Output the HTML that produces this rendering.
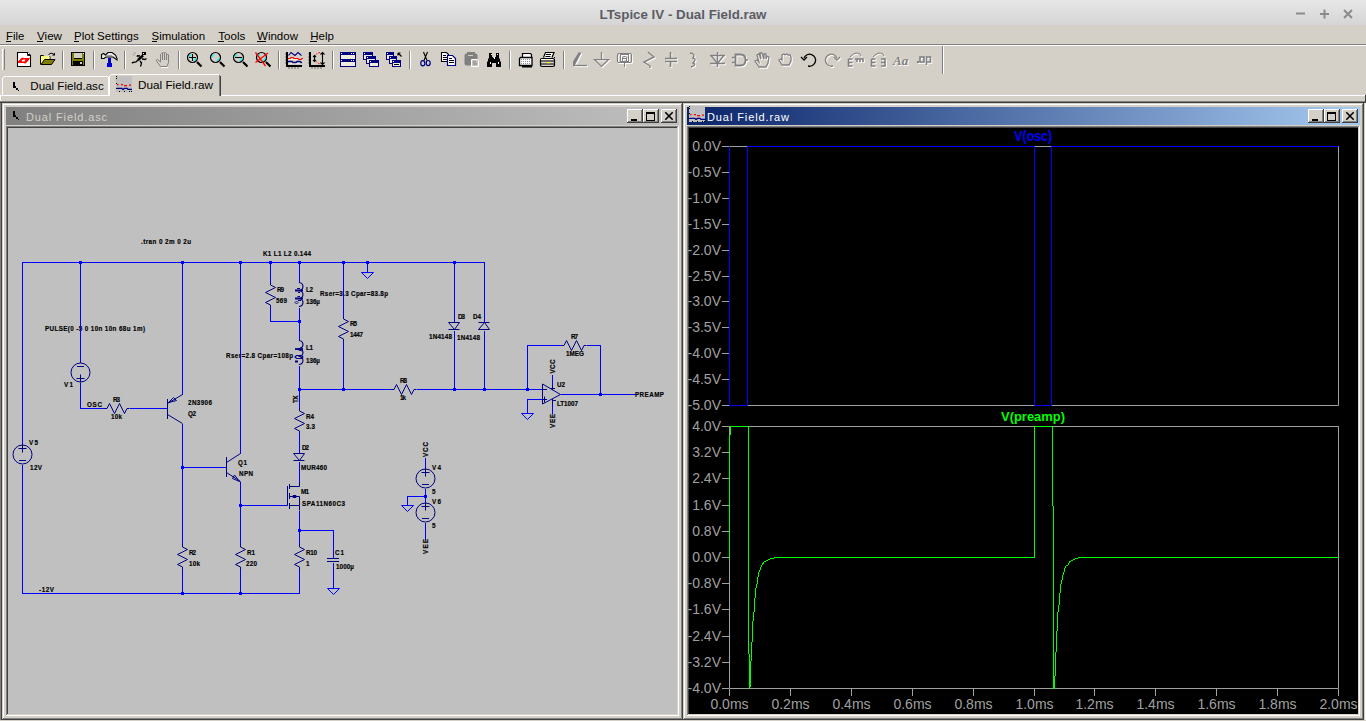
<!DOCTYPE html><html><head><meta charset="utf-8"><title>LTspice IV - Dual Field.raw</title><style>
*{margin:0;padding:0;box-sizing:border-box}
html,body{width:1366px;height:721px;overflow:hidden;background:#d4d0c8;font-family:"Liberation Sans",sans-serif}
.a{position:absolute}
svg{position:absolute;left:0;top:0}
</style></head><body>
<svg width="1366" height="721" viewBox="0 0 1366 721">
<defs><linearGradient id="tb" x1="0" y1="0" x2="0" y2="1"><stop offset="0" stop-color="#e7e7e7"/><stop offset="1" stop-color="#d5d5d5"/></linearGradient><linearGradient id="act" x1="0" y1="0" x2="1" y2="0"><stop offset="0" stop-color="#0a246a"/><stop offset="1" stop-color="#a6caf0"/></linearGradient><linearGradient id="inact" x1="0" y1="0" x2="1" y2="0"><stop offset="0" stop-color="#808080"/><stop offset="1" stop-color="#c0c0c0"/></linearGradient></defs><rect x="0" y="0" width="1366" height="25" fill="url(#tb)"/><text x="683" y="19" text-anchor="middle" font-family="Liberation Sans" font-weight="bold" font-size="13" fill="#5c5c66" textLength="167" lengthAdjust="spacingAndGlyphs">LTspice IV - Dual Field.raw</text><path d="M1296 13.5h9" stroke="#8a8a8a" stroke-width="2"/><path d="M1320 14h9M1324.5 9.5v9" stroke="#8a8a8a" stroke-width="2"/><path d="M1344 10l8 8M1352 10l-8 8" stroke="#8a8a8a" stroke-width="2"/><text x="6" y="39.5" font-family="Liberation Sans" font-size="11" fill="#000" textLength="18.3" lengthAdjust="spacingAndGlyphs">File</text><text x="37" y="39.5" font-family="Liberation Sans" font-size="11" fill="#000" textLength="25" lengthAdjust="spacingAndGlyphs">View</text><text x="74" y="39.5" font-family="Liberation Sans" font-size="11" fill="#000" textLength="64.8" lengthAdjust="spacingAndGlyphs">Plot Settings</text><text x="151.5" y="39.5" font-family="Liberation Sans" font-size="11" fill="#000" textLength="53.5" lengthAdjust="spacingAndGlyphs">Simulation</text><text x="218.2" y="39.5" font-family="Liberation Sans" font-size="11" fill="#000" textLength="27.1" lengthAdjust="spacingAndGlyphs">Tools</text><text x="257" y="39.5" font-family="Liberation Sans" font-size="11" fill="#000" textLength="41" lengthAdjust="spacingAndGlyphs">Window</text><text x="310.2" y="39.5" font-family="Liberation Sans" font-size="11" fill="#000" textLength="23.7" lengthAdjust="spacingAndGlyphs">Help</text><rect x="0" y="44" width="1366" height="1" fill="#808080"/><rect x="0" y="45" width="1366" height="1" fill="#ffffff"/><rect x="6" y="41" width="5" height="1" fill="#000"/><rect x="37" y="41" width="6" height="1" fill="#000"/><rect x="74" y="41" width="5" height="1" fill="#000"/><rect x="152" y="41" width="5" height="1" fill="#000"/><rect x="218" y="41" width="6" height="1" fill="#000"/><rect x="257" y="41" width="9" height="1" fill="#000"/><rect x="310" y="41" width="7" height="1" fill="#000"/><rect x="2" y="49" width="1" height="21" fill="#ffffff"/><rect x="4" y="49" width="1" height="21" fill="#808080"/><rect x="3" y="49" width="1" height="1" fill="#ffffff"/><rect x="62" y="51" width="1" height="18" fill="#808080"/><rect x="63" y="51" width="1" height="18" fill="#ffffff"/><rect x="93" y="51" width="1" height="18" fill="#808080"/><rect x="94" y="51" width="1" height="18" fill="#ffffff"/><rect x="124" y="51" width="1" height="18" fill="#808080"/><rect x="125" y="51" width="1" height="18" fill="#ffffff"/><rect x="178" y="51" width="1" height="18" fill="#808080"/><rect x="179" y="51" width="1" height="18" fill="#ffffff"/><rect x="278" y="51" width="1" height="18" fill="#808080"/><rect x="279" y="51" width="1" height="18" fill="#ffffff"/><rect x="332" y="51" width="1" height="18" fill="#808080"/><rect x="333" y="51" width="1" height="18" fill="#ffffff"/><rect x="409" y="51" width="1" height="18" fill="#808080"/><rect x="410" y="51" width="1" height="18" fill="#ffffff"/><rect x="509" y="51" width="1" height="18" fill="#808080"/><rect x="510" y="51" width="1" height="18" fill="#ffffff"/><rect x="563" y="51" width="1" height="18" fill="#808080"/><rect x="564" y="51" width="1" height="18" fill="#ffffff"/><rect x="942" y="46" width="1" height="28" fill="#808080"/><rect x="943" y="46" width="1" height="28" fill="#ffffff"/><path d="M17.5 52.5H27.5L30.5 55.5V66.5H17.5Z" fill="#fff" stroke="#000" stroke-width="1.1"/><path d="M27.5 52.5v3h3" fill="#000" stroke="#000" stroke-width="0.8"/><rect x="28" y="53" width="1" height="1" fill="#fff"/><path d="M18 61.5L20.5 59L22 57.5L23.5 58H30.5V57.5L28 61L26 63L24.5 64V63H18Z" fill="#f00"/><path d="M21.5 60.5L23 59.5H25.5L24.5 61.5H22.5Z" fill="#fff"/><defs><pattern id="chk" width="2" height="2" patternUnits="userSpaceOnUse"><rect width="2" height="2" fill="#ffff00"/><rect width="1" height="1" fill="#fff"/><rect x="1" y="1" width="1" height="1" fill="#fff"/></pattern></defs><path d="M40.5 64.5V55.5h3l1 1h5.5v3" fill="url(#chk)" stroke="#000"/><path d="M41 56h8.5v3.5h-4L41 64z" fill="url(#chk)"/><path d="M41 64.5L44.5 59.5H55L51.5 64.5Z" fill="#808000" stroke="#000"/><path d="M48.5 54.5Q51 52 53.5 54" fill="none" stroke="#000"/><path d="M52 55.5h3v-3z" fill="#000"/><rect x="71" y="52" width="14" height="14" fill="#000"/><rect x="72" y="53" width="12" height="12" fill="#808000"/><rect x="74" y="53" width="8" height="5" fill="#d4d0c8"/><rect x="74" y="58" width="8" height="1" fill="#000"/><rect x="73" y="61" width="10" height="4" fill="#000"/><rect x="80" y="62" width="2" height="2" fill="#d4d0c8"/><rect x="83" y="53" width="1" height="1" fill="#fff"/><path d="M101.5 54.5L103.5 53.5L105.5 55L108 52.5H112L115.5 55L117 58.5V60L113 57H106L104 58.5H101.5Z" fill="#e8e8e8" stroke="#000" stroke-width="1.1"/><path d="M106 55.5h6" stroke="#a0a0a0"/><rect x="108" y="58" width="3" height="5" fill="#0000c0"/><rect x="107" y="63" width="5" height="4" fill="#0000e0"/><rect x="142" y="52" width="4" height="3" fill="#000"/><rect x="143" y="53" width="1" height="1" fill="#fff"/><path d="M143 55.5L137.5 60.5L136 62L132.5 62.5V63.5M140 61L141.5 63L141 65L140.5 66.5M142 59L145 59.5L146.5 58.5M140 56L137.5 55.8L137 56.8" fill="none" stroke="#000" stroke-width="1.3"/><path d="M143 55.5L138 60" stroke="#000" stroke-width="2.4"/><path d="M134 52.5l2 1M132.5 54l2 1.5" stroke="#909090" stroke-width="0.9"/><path d="M160.5 66.5L156 60.5L157.5 59.5L160.5 62V54.5L161.5 53.5L162.5 54.5V60V53L163.5 52L164.5 53V60V53.5L165.5 52.5L166.5 53.5V60V55L167.5 54L168.5 55V62.5L167 66.5Z" fill="#d4d0c8" stroke="#808080" stroke-width="1"/><path d="M161 67.5h7" stroke="#fff"/><circle cx="192.5" cy="57.5" r="5" fill="#d4d0c8" stroke="#000" stroke-width="1.2"/><path d="M189.0 57.5A3.6 3.6 0 0 1 191.5 54.5M196.0 58.0A3.6 3.6 0 0 1 193.5 60.7" stroke="#00ffff" stroke-width="1.2" fill="none"/><path d="M197.0 62.0L201.5 66.5" stroke="#000" stroke-width="2.2"/><path d="M189 57.5h7M192.5 54v7" stroke="#000" stroke-width="1.1"/><circle cx="215.5" cy="57.5" r="5" fill="#d4d0c8" stroke="#000" stroke-width="1.2"/><path d="M212.0 57.5A3.6 3.6 0 0 1 214.5 54.5M219.0 58.0A3.6 3.6 0 0 1 216.5 60.7" stroke="#00ffff" stroke-width="1.2" fill="none"/><path d="M220.0 62.0L224.5 66.5" stroke="#000" stroke-width="2.2"/><circle cx="238.5" cy="57.5" r="5" fill="#d4d0c8" stroke="#000" stroke-width="1.2"/><path d="M235.0 57.5A3.6 3.6 0 0 1 237.5 54.5M242.0 58.0A3.6 3.6 0 0 1 239.5 60.7" stroke="#00ffff" stroke-width="1.2" fill="none"/><path d="M243.0 62.0L247.5 66.5" stroke="#000" stroke-width="2.2"/><path d="M235 57.5h7" stroke="#000" stroke-width="1.1"/><circle cx="261.5" cy="57.5" r="5" fill="#d4d0c8" stroke="#000" stroke-width="1.2"/><path d="M258.0 57.5A3.6 3.6 0 0 1 260.5 54.5M265.0 58.0A3.6 3.6 0 0 1 262.5 60.7" stroke="#00ffff" stroke-width="1.2" fill="none"/><path d="M266.0 62.0L270.5 66.5" stroke="#000" stroke-width="2.2"/><path d="M255.5 52.5L265.5 66.0M268.0 53.0L255.5 62.5" stroke="#f00" stroke-width="1.3"/><rect x="286" y="52" width="2" height="15" fill="#000"/><rect x="286" y="65" width="16" height="2" fill="#000"/><path d="M285.5 54h1M285.5 57h1M285.5 60h1M285.5 63h1M289 67.5v1M292 67.5v1M295 67.5v1M298 67.5v1" stroke="#000" stroke-dasharray="1 1"/><path d="M289 59.5h13M289 63.5h13" stroke="#f0ecd8"/><path d="M288.5 55.5L291 52.5L295 55.5L298 52.5L301.5 55.5" fill="none" stroke="#000080" stroke-width="1.1"/><path d="M288 58.5h2l1-1h2l1 1h4l1 1h2l1-1h1" fill="none" stroke="#f00" stroke-width="1.2"/><path d="M288 61.5h4l1 1h3l1-1h3l1 1h1" fill="none" stroke="#000080" stroke-width="1.4"/><rect x="309" y="52" width="2" height="15" fill="#000"/><rect x="309" y="65" width="16" height="2" fill="#000"/><path d="M308.5 54h1M308.5 57h1M308.5 60h1M308.5 63h1M312 67.5v1M315 67.5v1M318 67.5v1M321 67.5v1" stroke="#000"/><path d="M320 52.5Q314 54 314.5 58.5Q315 62 320 64" fill="none" stroke="#f00" stroke-dasharray="1.5 1"/><path d="M322.5 52.5v12M320.5 54.5l2-2 2 2M320.5 62.5l2 2 2-2M314.5 55.5v6M313 57l1.5-1.5 1.5 1.5M313 60l1.5 1.5 1.5-1.5" fill="none" stroke="#000" stroke-width="1.1"/><rect x="340" y="52" width="16" height="8" fill="#000080"/><rect x="341" y="55" width="14" height="4" fill="#f0ecdc"/><rect x="341" y="53" width="1" height="1" fill="#fff"/><rect x="340" y="59" width="16" height="8" fill="#000080"/><rect x="341" y="62" width="14" height="4" fill="#f0ecdc"/><rect x="341" y="60" width="1" height="1" fill="#fff"/><rect x="353" y="53" width="1" height="1" fill="#fff"/><rect x="351" y="53" width="1" height="1" fill="#fff"/><rect x="353" y="60" width="1" height="1" fill="#fff"/><rect x="351" y="60" width="1" height="1" fill="#fff"/><rect x="363" y="52" width="10" height="8" fill="#000080"/><rect x="364" y="55" width="8" height="4" fill="#f0ecdc"/><rect x="364" y="53" width="1" height="1" fill="#fff"/><rect x="366" y="56" width="10" height="8" fill="#000080"/><rect x="367" y="59" width="8" height="4" fill="#f0ecdc"/><rect x="367" y="57" width="1" height="1" fill="#fff"/><rect x="369" y="60" width="10" height="7" fill="#000080"/><rect x="370" y="63" width="8" height="3" fill="#f0ecdc"/><rect x="370" y="61" width="1" height="1" fill="#fff"/><rect x="386" y="52" width="8" height="8" fill="#000080"/><rect x="387" y="55" width="6" height="4" fill="#f0ecdc"/><rect x="387" y="53" width="1" height="1" fill="#fff"/><rect x="389" y="56" width="8" height="8" fill="#000080"/><rect x="390" y="59" width="6" height="4" fill="#f0ecdc"/><rect x="390" y="57" width="1" height="1" fill="#fff"/><rect x="392" y="60" width="9" height="7" fill="#000080"/><rect x="393" y="63" width="7" height="3" fill="#f0ecdc"/><rect x="393" y="61" width="1" height="1" fill="#fff"/><rect x="394" y="64" width="5" height="1" fill="#000"/><path d="M398.5 53.5l3 3M398 53h2.5M398 53v2.5" stroke="#000" stroke-width="1.2"/><path d="M423.5 52L427 60.5M427.5 52L424 60.5" stroke="#000" stroke-width="1.1"/><ellipse cx="422.8" cy="63.3" rx="2" ry="2.6" fill="none" stroke="#000080" stroke-width="1.2"/><ellipse cx="428.2" cy="63.1" rx="2" ry="2.6" fill="none" stroke="#000080" stroke-width="1.2"/><path d="M441.5 52.5h5l2 2v7h-7z" fill="#fff" stroke="#000" stroke-width="1.1"/><path d="M443 55.5h3M443 57.5h4M443 59.5h4" stroke="#000"/><path d="M447.5 55.5h5l3 3v7h-8z" fill="#fff" stroke="#000080" stroke-width="1.2"/><path d="M449 58.5h3M449 60.5h5M449 62.5h5" stroke="#000"/><rect x="464.5" y="53.5" width="13" height="12" rx="2" fill="#808080"/><rect x="467" y="52" width="8" height="2" fill="#808080"/><rect x="468" y="55" width="5" height="1" fill="#d4d0c8"/><path d="M471.5 59.5h6l1 1v6h-7z" fill="#c8c4bc" stroke="#fff"/><path d="M473 62h3M473 64h4" stroke="#808080"/><path d="M489 53h3v4h1v1h2v-1h1v-4h3v5l1 1v2l1 1v5h-5v-4h-4v4h-5v-5l1-1v-2l1-1z" fill="#000"/><rect x="491" y="54" width="1" height="1" fill="#fff"/><rect x="497" y="54" width="1" height="1" fill="#fff"/><rect x="490" y="62" width="1" height="2" fill="#fff"/><rect x="498" y="62" width="1" height="2" fill="#fff"/><rect x="494" y="57" width="1" height="2" fill="#fff"/><path d="M522.5 57V53.5h8l1 1V57" fill="#fff" stroke="#000" stroke-width="1.2"/><path d="M519.5 65.5V58.5l1-1h11.5v8z" fill="#fff" stroke="#000" stroke-width="1.3"/><rect x="522" y="66" width="10" height="1.5" fill="#000"/><path d="M521 59.5h10M521 61.5h10M521 63.5h10" stroke="#909090" stroke-dasharray="1 1"/><path d="M543.5 57.5L545.5 52.5H554L552 57.5" fill="#fff" stroke="#000" stroke-width="1.2"/><path d="M546 54.5h5M545.5 56.5h5" stroke="#000"/><rect x="540.5" y="58.5" width="14" height="8" rx="1.5" fill="#d4d0c8" stroke="#000" stroke-width="1.2"/><path d="M541 59.5h12" stroke="#fff"/><path d="M541 61h13M541 64h13" stroke="#000"/><rect x="547" y="62" width="3" height="1.2" fill="#ffff00"/><path d="M554.5 57v9" stroke="#000" stroke-dasharray="1 1"/><g transform="translate(574,53)"><path d="M0 13.5V9.5L5.5 0.5H8.5L2 13z" fill="#ffffff"/><path d="M0 13.5h14" stroke="#ffffff" stroke-width="1.3"/></g><g transform="translate(573,52)"><path d="M0 13.5V9.5L5.5 0.5H8.5L2 13z" fill="#808080"/><path d="M0 13.5h14" stroke="#808080" stroke-width="1.3"/></g><g transform="translate(595,53)"><path d="M7.5 0v7" stroke="#ffffff" stroke-width="1.3"/><path d="M0.5 7.6h14l-7 6.8z" fill="none" stroke="#ffffff" stroke-width="1.3"/></g><g transform="translate(594,52)"><path d="M7.5 0v7" stroke="#808080" stroke-width="1.3"/><path d="M0.5 7.6h14l-7 6.8z" fill="none" stroke="#808080" stroke-width="1.3"/></g><g transform="translate(618,53)"><rect x="0.5" y="1.5" width="14" height="9" rx="1.5" fill="none" stroke="#ffffff" stroke-width="1.2"/><rect x="3.5" y="2.5" width="8" height="7" fill="none" stroke="#ffffff" stroke-width="1"/><path d="M5.5 9V5.5L6.5 4.5H8.5L9.5 5.5V9M5.5 6.5H9.5" fill="none" stroke="#ffffff" stroke-width="1"/><path d="M7.5 11v4" stroke="#ffffff" stroke-width="1.1"/></g><g transform="translate(617,52)"><rect x="0.5" y="1.5" width="14" height="9" rx="1.5" fill="none" stroke="#808080" stroke-width="1.2"/><rect x="3.5" y="2.5" width="8" height="7" fill="none" stroke="#808080" stroke-width="1"/><path d="M5.5 9V5.5L6.5 4.5H8.5L9.5 5.5V9M5.5 6.5H9.5" fill="none" stroke="#808080" stroke-width="1"/><path d="M7.5 11v4" stroke="#808080" stroke-width="1.1"/></g><g transform="translate(643,53)"><path d="M6 0l1 1l5 4-10 5 6 4v2" fill="none" stroke="#ffffff" stroke-width="1.4"/></g><g transform="translate(642,52)"><path d="M6 0l1 1l5 4-10 5 6 4v2" fill="none" stroke="#808080" stroke-width="1.4"/></g><g transform="translate(666,53)"><path d="M5.5 0v6M5.5 10v5M0 6.5h12M0 9.5h12" stroke="#ffffff" stroke-width="1.6"/></g><g transform="translate(665,52)"><path d="M5.5 0v6M5.5 10v5M0 6.5h12M0 9.5h12" stroke="#808080" stroke-width="1.6"/></g><g transform="translate(691,53)"><path d="M0 1q6 1 3 5q4 1 0 5q4 2-2 4" fill="none" stroke="#ffffff" stroke-width="1.4"/></g><g transform="translate(690,52)"><path d="M0 1q6 1 3 5q4 1 0 5q4 2-2 4" fill="none" stroke="#808080" stroke-width="1.4"/></g><g transform="translate(711,53)"><path d="M7.5 0v15M0 3.5h15M0 11.5h15" stroke="#ffffff" stroke-width="1.4"/><path d="M1 3.5l6.5 8 6.5-8" fill="none" stroke="#ffffff" stroke-width="1.4"/></g><g transform="translate(710,52)"><path d="M7.5 0v15M0 3.5h15M0 11.5h15" stroke="#808080" stroke-width="1.4"/><path d="M1 3.5l6.5 8 6.5-8" fill="none" stroke="#808080" stroke-width="1.4"/></g><g transform="translate(733,53)"><path d="M3.5 2.5h5q5 0 5 5.5t-5 5.5h-5z" fill="none" stroke="#ffffff" stroke-width="1.8"/><path d="M0 5.5h4M0 10.5h4M13 8h3" stroke="#ffffff" stroke-width="1.4"/></g><g transform="translate(732,52)"><path d="M3.5 2.5h5q5 0 5 5.5t-5 5.5h-5z" fill="none" stroke="#808080" stroke-width="1.8"/><path d="M0 5.5h4M0 10.5h4M13 8h3" stroke="#808080" stroke-width="1.4"/></g><g transform="translate(756,53)"><path d="M4 15l-4-6 2-1 2 2-2-7 2-1 2 5-1-6 2 0 2 6v-5l2 0 0 5 1-3 2 1-1 6-2 4z" fill="none" stroke="#ffffff" stroke-width="1.3"/></g><g transform="translate(755,52)"><path d="M4 15l-4-6 2-1 2 2-2-7 2-1 2 5-1-6 2 0 2 6v-5l2 0 0 5 1-3 2 1-1 6-2 4z" fill="none" stroke="#808080" stroke-width="1.3"/></g><g transform="translate(780,53)"><path d="M3 13l-3-5 2-1 1 1v-5l2-1 1 1 2-1 1 1 2 0 1 2v4l-2 4z" fill="none" stroke="#ffffff" stroke-width="1.3"/></g><g transform="translate(779,52)"><path d="M3 13l-3-5 2-1 1 1v-5l2-1 1 1 2-1 1 1 2 0 1 2v4l-2 4z" fill="none" stroke="#808080" stroke-width="1.3"/></g><g transform="translate(801,52)"><path d="M3 6a6 6 0 1 1 4 8" fill="none" stroke="#000" stroke-width="1.3"/><path d="M0 5l3 3 3-3" fill="none" stroke="#000" stroke-width="1.3"/></g><g transform="translate(826,53)"><path d="M12 6a6 6 0 1 0-4 8" fill="none" stroke="#ffffff" stroke-width="1.3"/><path d="M9 5l3 3 3-3" fill="none" stroke="#ffffff" stroke-width="1.3"/></g><g transform="translate(825,52)"><path d="M12 6a6 6 0 1 0-4 8" fill="none" stroke="#808080" stroke-width="1.3"/><path d="M9 5l3 3 3-3" fill="none" stroke="#808080" stroke-width="1.3"/></g><g transform="translate(848,53)"><path d="M1.5 7v7h4M1.5 7h4M1.5 10.5h4M8 7h8v3M10 7v3M13 7v3" fill="none" stroke="#ffffff" stroke-width="1.6"/><path d="M3 5q5-6 10-3l1 2" fill="none" stroke="#ffffff"/></g><g transform="translate(847,52)"><path d="M1.5 7v7h4M1.5 7h4M1.5 10.5h4M8 7h8v3M10 7v3M13 7v3" fill="none" stroke="#808080" stroke-width="1.6"/><path d="M3 5q5-6 10-3l1 2" fill="none" stroke="#808080"/></g><g transform="translate(871,53)"><path d="M1.5 7v7h4M1.5 7h4M1.5 10.5h4M11 7h4v7h-4M11 10.5h4" fill="none" stroke="#ffffff" stroke-width="1.6"/><path d="M3 5q5-6 10-3l1 2" fill="none" stroke="#ffffff"/></g><g transform="translate(870,52)"><path d="M1.5 7v7h4M1.5 7h4M1.5 10.5h4M11 7h4v7h-4M11 10.5h4" fill="none" stroke="#808080" stroke-width="1.6"/><path d="M3 5q5-6 10-3l1 2" fill="none" stroke="#808080"/></g><g transform="translate(894,53)"><text x="0" y="13" font-size="13" font-style="italic" font-weight="bold" font-family="Liberation Serif" fill="#ffffff">Aa</text></g><g transform="translate(893,52)"><text x="0" y="13" font-size="13" font-style="italic" font-weight="bold" font-family="Liberation Serif" fill="#808080">Aa</text></g><g transform="translate(918,53)"><rect x="0" y="9" width="2" height="2" fill="#ffffff"/><rect x="3" y="5" width="4" height="5" fill="none" stroke="#ffffff" stroke-width="1.6"/><path d="M9.5 13v-8h4v5h-4" fill="none" stroke="#ffffff" stroke-width="1.6"/></g><g transform="translate(917,52)"><rect x="0" y="9" width="2" height="2" fill="#808080"/><rect x="3" y="5" width="4" height="5" fill="none" stroke="#808080" stroke-width="1.6"/><path d="M9.5 13v-8h4v5h-4" fill="none" stroke="#808080" stroke-width="1.6"/></g><rect x="0" y="95" width="109" height="1" fill="#fff"/><rect x="221" y="95" width="1145" height="1" fill="#fff"/><rect x="0" y="95" width="1" height="7" fill="#fff"/><rect x="2" y="78" width="1" height="17" fill="#fff"/><rect x="4" y="76" width="104" height="1" fill="#fff"/><rect x="3" y="77" width="1" height="1" fill="#fff"/><rect x="108" y="77" width="1" height="18" fill="#fff"/><rect x="109" y="76" width="1" height="20" fill="#fff"/><rect x="111" y="74" width="108" height="1" fill="#fff"/><rect x="110" y="75" width="1" height="1" fill="#fff"/><rect x="219" y="75" width="1" height="21" fill="#808080"/><rect x="220" y="76" width="1" height="20" fill="#404040"/><text x="30.3" y="89.6" font-family="Liberation Sans" font-size="11" fill="#000" textLength="73.4" lengthAdjust="spacingAndGlyphs">Dual Field.asc</text><text x="138" y="89" font-family="Liberation Sans" font-size="11" fill="#000" textLength="75" lengthAdjust="spacingAndGlyphs">Dual Field.raw</text><g transform="translate(13,82)"><rect x="0" y="0" width="2" height="5" fill="#000"/><rect x="0" y="4" width="3" height="2" fill="#000"/><rect x="3" y="6" width="2" height="2" fill="#000"/><rect x="5" y="8" width="1" height="1" fill="#000"/></g><g transform="translate(116,76)"><rect x="0" y="0" width="16" height="16" fill="#c0c0c0"/><rect x="0" y="0" width="1" height="1" fill="#000"/><rect x="0" y="2" width="1" height="1" fill="#000"/><rect x="0" y="7" width="1" height="1" fill="#000"/><rect x="0" y="12" width="1" height="1" fill="#000"/><rect x="3" y="15" width="1" height="1" fill="#000"/><rect x="8" y="15" width="1" height="1" fill="#000"/><rect x="13" y="15" width="1" height="1" fill="#000"/><rect x="15" y="15" width="1" height="1" fill="#000"/><rect x="1" y="8" width="1.5" height="1.3" fill="#f00"/><rect x="5" y="8" width="2" height="1.3" fill="#f00"/><rect x="8" y="9" width="3" height="1.3" fill="#f00"/><rect x="13" y="8.5" width="2" height="1.3" fill="#f00"/><path d="M0.5 12.3H5.8L6.8 13.3H7.5L8.2 12.3H11L12 13.3H16" fill="none" stroke="#000080" stroke-width="1.3"/></g><rect x="0" y="101" width="1366" height="1" fill="#808080"/><rect x="0" y="102" width="1366" height="1" fill="#404040"/><rect x="0" y="103" width="1" height="618" fill="#808080"/><rect x="1" y="103" width="1" height="618" fill="#404040"/><rect x="1364" y="103" width="1" height="618" fill="#d4d0c8"/><rect x="1365" y="103" width="1" height="618" fill="#ffffff"/><rect x="1365" y="95" width="1" height="8" fill="#404040"/><rect x="0" y="720" width="1366" height="1" fill="#d4d0c8"/><rect x="2" y="103" width="681" height="617" fill="#d4d0c8"/><rect x="2" y="103" width="681" height="1" fill="#d4d0c8"/><rect x="2" y="103" width="1" height="617" fill="#d4d0c8"/><rect x="3" y="104" width="679" height="1" fill="#fff"/><rect x="3" y="104" width="1" height="615" fill="#fff"/><rect x="2" y="719" width="681" height="1" fill="#404040"/><rect x="682" y="103" width="1" height="617" fill="#404040"/><rect x="3" y="718" width="679" height="1" fill="#808080"/><rect x="681" y="104" width="1" height="615" fill="#808080"/><rect x="6" y="107" width="673" height="18" fill="url(#inact)"/><text x="26" y="120.7" font-family="Liberation Sans" font-size="11" fill="#d4d0c8" textLength="81" lengthAdjust="spacing">Dual Field.asc</text><rect x="661" y="109" width="16" height="14" fill="#d4d0c8"/><rect x="661" y="109" width="16" height="1" fill="#fff"/><rect x="661" y="109" width="1" height="14" fill="#fff"/><rect x="661" y="122" width="16" height="1" fill="#404040"/><rect x="676" y="109" width="1" height="14" fill="#404040"/><rect x="662" y="121" width="14" height="1" fill="#808080"/><rect x="675" y="110" width="1" height="12" fill="#808080"/><path d="M665.3 112.3l7.4 7.4M672.7 112.3l-7.4 7.4" stroke="#000" stroke-width="1.6"/><rect x="643" y="109" width="16" height="14" fill="#d4d0c8"/><rect x="643" y="109" width="16" height="1" fill="#fff"/><rect x="643" y="109" width="1" height="14" fill="#fff"/><rect x="643" y="122" width="16" height="1" fill="#404040"/><rect x="658" y="109" width="1" height="14" fill="#404040"/><rect x="644" y="121" width="14" height="1" fill="#808080"/><rect x="657" y="110" width="1" height="12" fill="#808080"/><rect x="646" y="112" width="9" height="2" fill="#000"/><rect x="646" y="112" width="1" height="9" fill="#000"/><rect x="654" y="112" width="1" height="9" fill="#000"/><rect x="646" y="120" width="9" height="1" fill="#000"/><rect x="627" y="109" width="16" height="14" fill="#d4d0c8"/><rect x="627" y="109" width="16" height="1" fill="#fff"/><rect x="627" y="109" width="1" height="14" fill="#fff"/><rect x="627" y="122" width="16" height="1" fill="#404040"/><rect x="642" y="109" width="1" height="14" fill="#404040"/><rect x="628" y="121" width="14" height="1" fill="#808080"/><rect x="641" y="110" width="1" height="12" fill="#808080"/><rect x="631" y="119" width="6" height="2" fill="#000"/><rect x="6" y="126" width="673" height="1" fill="#808080"/><rect x="6" y="126" width="1" height="590" fill="#808080"/><rect x="7" y="127" width="671" height="1" fill="#404040"/><rect x="7" y="127" width="1" height="588" fill="#404040"/><rect x="6" y="715" width="673" height="1" fill="#fff"/><rect x="678" y="126" width="1" height="590" fill="#fff"/><rect x="7" y="714" width="671" height="1" fill="#d4d0c8"/><rect x="677" y="127" width="1" height="588" fill="#d4d0c8"/><rect x="683" y="103" width="681" height="617" fill="#d4d0c8"/><rect x="683" y="103" width="681" height="1" fill="#d4d0c8"/><rect x="683" y="103" width="1" height="617" fill="#d4d0c8"/><rect x="684" y="104" width="679" height="1" fill="#fff"/><rect x="684" y="104" width="1" height="615" fill="#fff"/><rect x="683" y="719" width="681" height="1" fill="#404040"/><rect x="1363" y="103" width="1" height="617" fill="#404040"/><rect x="684" y="718" width="679" height="1" fill="#808080"/><rect x="1362" y="104" width="1" height="615" fill="#808080"/><rect x="687" y="107" width="673" height="18" fill="url(#act)"/><text x="707" y="120.7" font-family="Liberation Sans" font-size="11" fill="#ffffff" textLength="82" lengthAdjust="spacing">Dual Field.raw</text><rect x="1342" y="109" width="16" height="14" fill="#d4d0c8"/><rect x="1342" y="109" width="16" height="1" fill="#fff"/><rect x="1342" y="109" width="1" height="14" fill="#fff"/><rect x="1342" y="122" width="16" height="1" fill="#404040"/><rect x="1357" y="109" width="1" height="14" fill="#404040"/><rect x="1343" y="121" width="14" height="1" fill="#808080"/><rect x="1356" y="110" width="1" height="12" fill="#808080"/><path d="M1346.3 112.3l7.4 7.4M1353.7 112.3l-7.4 7.4" stroke="#000" stroke-width="1.6"/><rect x="1324" y="109" width="16" height="14" fill="#d4d0c8"/><rect x="1324" y="109" width="16" height="1" fill="#fff"/><rect x="1324" y="109" width="1" height="14" fill="#fff"/><rect x="1324" y="122" width="16" height="1" fill="#404040"/><rect x="1339" y="109" width="1" height="14" fill="#404040"/><rect x="1325" y="121" width="14" height="1" fill="#808080"/><rect x="1338" y="110" width="1" height="12" fill="#808080"/><rect x="1327" y="112" width="9" height="2" fill="#000"/><rect x="1327" y="112" width="1" height="9" fill="#000"/><rect x="1335" y="112" width="1" height="9" fill="#000"/><rect x="1327" y="120" width="9" height="1" fill="#000"/><rect x="1308" y="109" width="16" height="14" fill="#d4d0c8"/><rect x="1308" y="109" width="16" height="1" fill="#fff"/><rect x="1308" y="109" width="1" height="14" fill="#fff"/><rect x="1308" y="122" width="16" height="1" fill="#404040"/><rect x="1323" y="109" width="1" height="14" fill="#404040"/><rect x="1309" y="121" width="14" height="1" fill="#808080"/><rect x="1322" y="110" width="1" height="12" fill="#808080"/><rect x="1312" y="119" width="6" height="2" fill="#000"/><rect x="687" y="126" width="673" height="1" fill="#808080"/><rect x="687" y="126" width="1" height="590" fill="#808080"/><rect x="688" y="127" width="671" height="1" fill="#404040"/><rect x="688" y="127" width="1" height="588" fill="#404040"/><rect x="687" y="715" width="673" height="1" fill="#fff"/><rect x="1359" y="126" width="1" height="590" fill="#fff"/><rect x="688" y="714" width="671" height="1" fill="#d4d0c8"/><rect x="1358" y="127" width="1" height="588" fill="#d4d0c8"/><g transform="translate(13,111)"><rect x="0" y="0" width="2" height="5" fill="#000"/><rect x="0" y="4" width="3" height="2" fill="#000"/><rect x="3" y="6" width="2" height="2" fill="#000"/><rect x="5" y="8" width="1" height="1" fill="#000"/></g><g transform="translate(689,106)"><rect x="0" y="0" width="16" height="16" fill="#c0c0c0"/><rect x="0" y="0" width="1" height="1" fill="#000"/><rect x="0" y="2" width="1" height="1" fill="#000"/><rect x="0" y="7" width="1" height="1" fill="#000"/><rect x="0" y="12" width="1" height="1" fill="#000"/><rect x="3" y="15" width="1" height="1" fill="#000"/><rect x="8" y="15" width="1" height="1" fill="#000"/><rect x="13" y="15" width="1" height="1" fill="#000"/><rect x="15" y="15" width="1" height="1" fill="#000"/><rect x="1" y="8" width="1.5" height="1.3" fill="#f00"/><rect x="5" y="8" width="2" height="1.3" fill="#f00"/><rect x="8" y="9" width="3" height="1.3" fill="#f00"/><rect x="13" y="8.5" width="2" height="1.3" fill="#f00"/><path d="M0.5 12.3H5.8L6.8 13.3H7.5L8.2 12.3H11L12 13.3H16" fill="none" stroke="#000080" stroke-width="1.3"/></g>
<rect x="8" y="128" width="669" height="586" fill="#c0c0c0"/><rect x="689" y="128" width="669" height="586" fill="#000"/><path d="M729.5 146.5H1338.5V405.5H729.5Z" fill="none" stroke="#a0a0a0"/><path d="M1338.5 426.5V688.5H729.5V426.5Z" fill="none" stroke="#a0a0a0"/><path d="M729.5 426.5H1338.5" fill="none" stroke="#a0a0a0"/><path d="M722 146.5h7" stroke="#a0a0a0"/><text x="721" y="151" text-anchor="end" font-family="Liberation Sans" font-size="14" fill="#a0a0a0">0.0V</text><path d="M722 172.5h7" stroke="#a0a0a0"/><text x="721" y="177" text-anchor="end" font-family="Liberation Sans" font-size="14" fill="#a0a0a0">-0.5V</text><path d="M722 198.5h7" stroke="#a0a0a0"/><text x="721" y="203" text-anchor="end" font-family="Liberation Sans" font-size="14" fill="#a0a0a0">-1.0V</text><path d="M722 224.5h7" stroke="#a0a0a0"/><text x="721" y="229" text-anchor="end" font-family="Liberation Sans" font-size="14" fill="#a0a0a0">-1.5V</text><path d="M722 250.5h7" stroke="#a0a0a0"/><text x="721" y="255" text-anchor="end" font-family="Liberation Sans" font-size="14" fill="#a0a0a0">-2.0V</text><path d="M722 276.5h7" stroke="#a0a0a0"/><text x="721" y="281" text-anchor="end" font-family="Liberation Sans" font-size="14" fill="#a0a0a0">-2.5V</text><path d="M722 301.5h7" stroke="#a0a0a0"/><text x="721" y="306" text-anchor="end" font-family="Liberation Sans" font-size="14" fill="#a0a0a0">-3.0V</text><path d="M722 327.5h7" stroke="#a0a0a0"/><text x="721" y="332" text-anchor="end" font-family="Liberation Sans" font-size="14" fill="#a0a0a0">-3.5V</text><path d="M722 353.5h7" stroke="#a0a0a0"/><text x="721" y="358" text-anchor="end" font-family="Liberation Sans" font-size="14" fill="#a0a0a0">-4.0V</text><path d="M722 379.5h7" stroke="#a0a0a0"/><text x="721" y="384" text-anchor="end" font-family="Liberation Sans" font-size="14" fill="#a0a0a0">-4.5V</text><path d="M722 405.5h7" stroke="#a0a0a0"/><text x="721" y="410" text-anchor="end" font-family="Liberation Sans" font-size="14" fill="#a0a0a0">-5.0V</text><path d="M722 426.5h7" stroke="#a0a0a0"/><text x="721" y="431" text-anchor="end" font-family="Liberation Sans" font-size="14" fill="#a0a0a0">4.0V</text><path d="M722 452.5h7" stroke="#a0a0a0"/><text x="721" y="457" text-anchor="end" font-family="Liberation Sans" font-size="14" fill="#a0a0a0">3.2V</text><path d="M722 478.5h7" stroke="#a0a0a0"/><text x="721" y="483" text-anchor="end" font-family="Liberation Sans" font-size="14" fill="#a0a0a0">2.4V</text><path d="M722 505.5h7" stroke="#a0a0a0"/><text x="721" y="510" text-anchor="end" font-family="Liberation Sans" font-size="14" fill="#a0a0a0">1.6V</text><path d="M722 531.5h7" stroke="#a0a0a0"/><text x="721" y="536" text-anchor="end" font-family="Liberation Sans" font-size="14" fill="#a0a0a0">0.8V</text><path d="M722 557.5h7" stroke="#a0a0a0"/><text x="721" y="562" text-anchor="end" font-family="Liberation Sans" font-size="14" fill="#a0a0a0">0.0V</text><path d="M722 583.5h7" stroke="#a0a0a0"/><text x="721" y="588" text-anchor="end" font-family="Liberation Sans" font-size="14" fill="#a0a0a0">-0.8V</text><path d="M722 609.5h7" stroke="#a0a0a0"/><text x="721" y="614" text-anchor="end" font-family="Liberation Sans" font-size="14" fill="#a0a0a0">-1.6V</text><path d="M722 636.5h7" stroke="#a0a0a0"/><text x="721" y="641" text-anchor="end" font-family="Liberation Sans" font-size="14" fill="#a0a0a0">-2.4V</text><path d="M722 662.5h7" stroke="#a0a0a0"/><text x="721" y="667" text-anchor="end" font-family="Liberation Sans" font-size="14" fill="#a0a0a0">-3.2V</text><path d="M722 688.5h7" stroke="#a0a0a0"/><text x="721" y="693" text-anchor="end" font-family="Liberation Sans" font-size="14" fill="#a0a0a0">-4.0V</text><path d="M729.5 689v7" stroke="#a0a0a0"/><text x="729.5" y="709" text-anchor="middle" font-family="Liberation Sans" font-size="14" fill="#a0a0a0">0.0ms</text><path d="M790.5 689v7" stroke="#a0a0a0"/><text x="790.5" y="709" text-anchor="middle" font-family="Liberation Sans" font-size="14" fill="#a0a0a0">0.2ms</text><path d="M851.5 689v7" stroke="#a0a0a0"/><text x="851.5" y="709" text-anchor="middle" font-family="Liberation Sans" font-size="14" fill="#a0a0a0">0.4ms</text><path d="M912.5 689v7" stroke="#a0a0a0"/><text x="912.5" y="709" text-anchor="middle" font-family="Liberation Sans" font-size="14" fill="#a0a0a0">0.6ms</text><path d="M973.5 689v7" stroke="#a0a0a0"/><text x="973.5" y="709" text-anchor="middle" font-family="Liberation Sans" font-size="14" fill="#a0a0a0">0.8ms</text><path d="M1034.5 689v7" stroke="#a0a0a0"/><text x="1034.5" y="709" text-anchor="middle" font-family="Liberation Sans" font-size="14" fill="#a0a0a0">1.0ms</text><path d="M1094.5 689v7" stroke="#a0a0a0"/><text x="1094.5" y="709" text-anchor="middle" font-family="Liberation Sans" font-size="14" fill="#a0a0a0">1.2ms</text><path d="M1155.5 689v7" stroke="#a0a0a0"/><text x="1155.5" y="709" text-anchor="middle" font-family="Liberation Sans" font-size="14" fill="#a0a0a0">1.4ms</text><path d="M1216.5 689v7" stroke="#a0a0a0"/><text x="1216.5" y="709" text-anchor="middle" font-family="Liberation Sans" font-size="14" fill="#a0a0a0">1.6ms</text><path d="M1277.5 689v7" stroke="#a0a0a0"/><text x="1277.5" y="709" text-anchor="middle" font-family="Liberation Sans" font-size="14" fill="#a0a0a0">1.8ms</text><path d="M1338.5 689v7" stroke="#a0a0a0"/><text x="1338.5" y="709" text-anchor="middle" font-family="Liberation Sans" font-size="14" fill="#a0a0a0">2.0ms</text><path d="M729.5 146.5V405.5H747.5V146.5H1034.5V405.5H1051.5V146.5H1338" fill="none" stroke="#0000ff"/><text x="1014.3" y="141" font-family="Liberation Sans" font-weight="bold" font-size="14" fill="#0000ff" textLength="37.7" lengthAdjust="spacingAndGlyphs">V(osc)</text><rect x="729" y="435" width="1" height="124" fill="#00ff00"/><rect x="730" y="426" width="1" height="9" fill="#00ff00"/><rect x="730" y="426" width="19" height="1" fill="#00ff00"/><rect x="748" y="426" width="1" height="228" fill="#00ff00"/><rect x="749" y="654" width="1" height="35" fill="#00ff00"/><rect x="750" y="661" width="1" height="26" fill="#00ff00"/><rect x="751" y="642" width="1" height="19" fill="#00ff00"/><rect x="752" y="621" width="1" height="21" fill="#00ff00"/><rect x="753" y="612" width="1" height="9" fill="#00ff00"/><rect x="754" y="598" width="1" height="14" fill="#00ff00"/><rect x="755" y="588" width="1" height="10" fill="#00ff00"/><rect x="756" y="584" width="1" height="4" fill="#00ff00"/><rect x="757" y="577" width="1" height="7" fill="#00ff00"/><rect x="758" y="572" width="1" height="5" fill="#00ff00"/><rect x="759" y="570" width="1" height="2" fill="#00ff00"/><rect x="760" y="567" width="1" height="3" fill="#00ff00"/><rect x="761" y="565" width="1" height="2" fill="#00ff00"/><rect x="762" y="563" width="1" height="2" fill="#00ff00"/><rect x="763" y="562" width="1" height="2" fill="#00ff00"/><rect x="764" y="561" width="2" height="1" fill="#00ff00"/><rect x="766" y="560" width="2" height="1" fill="#00ff00"/><rect x="768" y="559" width="2" height="1" fill="#00ff00"/><rect x="770" y="558" width="4" height="1" fill="#00ff00"/><rect x="774" y="557" width="261" height="1" fill="#00ff00"/><rect x="1034" y="426" width="1" height="132" fill="#00ff00"/><rect x="1034" y="426" width="19" height="1" fill="#00ff00"/><rect x="1052" y="426" width="1" height="80" fill="#00ff00"/><rect x="1053" y="506" width="1" height="183" fill="#00ff00"/><rect x="1054" y="676" width="1" height="13" fill="#00ff00"/><rect x="1055" y="652" width="1" height="24" fill="#00ff00"/><rect x="1056" y="631" width="1" height="21" fill="#00ff00"/><rect x="1057" y="612" width="1" height="19" fill="#00ff00"/><rect x="1058" y="605" width="1" height="7" fill="#00ff00"/><rect x="1059" y="593" width="1" height="12" fill="#00ff00"/><rect x="1060" y="584" width="1" height="9" fill="#00ff00"/><rect x="1061" y="580" width="1" height="4" fill="#00ff00"/><rect x="1062" y="575" width="1" height="5" fill="#00ff00"/><rect x="1063" y="572" width="1" height="3" fill="#00ff00"/><rect x="1064" y="568" width="1" height="4" fill="#00ff00"/><rect x="1065" y="566" width="1" height="2" fill="#00ff00"/><rect x="1068" y="563" width="1" height="2" fill="#00ff00"/><rect x="1066" y="565" width="2" height="1" fill="#00ff00"/><rect x="1069" y="561" width="2" height="1" fill="#00ff00"/><rect x="1069" y="562" width="1" height="1" fill="#00ff00"/><rect x="1071" y="560" width="2" height="1" fill="#00ff00"/><rect x="1073" y="559" width="2" height="1" fill="#00ff00"/><rect x="1075" y="558" width="3" height="1" fill="#00ff00"/><rect x="1078" y="557" width="261" height="1" fill="#00ff00"/><text x="1001" y="421" font-family="Liberation Sans" font-weight="bold" font-size="13" fill="#00ff00" textLength="64" lengthAdjust="spacingAndGlyphs">V(preamp)</text>
<text transform="translate(141,244) scale(1,1.12)" x="0" y="0" font-family="Liberation Sans" font-weight="bold" font-size="6.3" fill="#000000" stroke="#000000" stroke-width="0.15" textLength="50" lengthAdjust="spacing">.tran 0 2m 0 2u</text><text transform="translate(45,331) scale(1,1.12)" x="0" y="0" font-family="Liberation Sans" font-weight="bold" font-size="6.3" fill="#000000" stroke="#000000" stroke-width="0.15" textLength="100" lengthAdjust="spacing">PULSE(0 -5 0 10n 10n 68u 1m)</text><text transform="translate(64,387) scale(1,1.12)" x="0" y="0" font-family="Liberation Sans" font-weight="bold" font-size="6.3" fill="#000000" stroke="#000000" stroke-width="0.15" textLength="9" lengthAdjust="spacing">V1</text><text transform="translate(87,407) scale(1,1.12)" x="0" y="0" font-family="Liberation Sans" font-weight="bold" font-size="6.3" fill="#000000" stroke="#000000" stroke-width="0.15" textLength="15" lengthAdjust="spacing">OSC</text><text transform="translate(113,402) scale(1,1.12)" x="0" y="0" font-family="Liberation Sans" font-weight="bold" font-size="6.3" fill="#000000" stroke="#000000" stroke-width="0.15" textLength="7" lengthAdjust="spacing">R3</text><text transform="translate(111,419) scale(1,1.12)" x="0" y="0" font-family="Liberation Sans" font-weight="bold" font-size="6.3" fill="#000000" stroke="#000000" stroke-width="0.15" textLength="11" lengthAdjust="spacing">10k</text><text transform="translate(188,405) scale(1,1.12)" x="0" y="0" font-family="Liberation Sans" font-weight="bold" font-size="6.3" fill="#000000" stroke="#000000" stroke-width="0.15" textLength="24" lengthAdjust="spacing">2N3906</text><text transform="translate(188,416) scale(1,1.12)" x="0" y="0" font-family="Liberation Sans" font-weight="bold" font-size="6.3" fill="#000000" stroke="#000000" stroke-width="0.15" textLength="8" lengthAdjust="spacing">Q2</text><text transform="translate(238,465) scale(1,1.12)" x="0" y="0" font-family="Liberation Sans" font-weight="bold" font-size="6.3" fill="#000000" stroke="#000000" stroke-width="0.15" textLength="9" lengthAdjust="spacing">Q1</text><text transform="translate(239,476) scale(1,1.12)" x="0" y="0" font-family="Liberation Sans" font-weight="bold" font-size="6.3" fill="#000000" stroke="#000000" stroke-width="0.15" textLength="14" lengthAdjust="spacing">NPN</text><text transform="translate(263,256) scale(1,1.12)" x="0" y="0" font-family="Liberation Sans" font-weight="bold" font-size="6.3" fill="#000000" stroke="#000000" stroke-width="0.15" textLength="48" lengthAdjust="spacing">K1 L1 L2 0.144</text><text transform="translate(277,292) scale(1,1.12)" x="0" y="0" font-family="Liberation Sans" font-weight="bold" font-size="6.3" fill="#000000" stroke="#000000" stroke-width="0.15" textLength="7" lengthAdjust="spacing">R9</text><text transform="translate(276,303) scale(1,1.12)" x="0" y="0" font-family="Liberation Sans" font-weight="bold" font-size="6.3" fill="#000000" stroke="#000000" stroke-width="0.15" textLength="11" lengthAdjust="spacing">569</text><text transform="translate(306,292) scale(1,1.12)" x="0" y="0" font-family="Liberation Sans" font-weight="bold" font-size="6.3" fill="#000000" stroke="#000000" stroke-width="0.15" textLength="7" lengthAdjust="spacing">L2</text><text transform="translate(306,304) scale(1,1.12)" x="0" y="0" font-family="Liberation Sans" font-weight="bold" font-size="6.3" fill="#000000" stroke="#000000" stroke-width="0.15" textLength="14" lengthAdjust="spacing">136µ</text><text transform="translate(320,296) scale(1,1.12)" x="0" y="0" font-family="Liberation Sans" font-weight="bold" font-size="6.3" fill="#000000" stroke="#000000" stroke-width="0.15" textLength="68" lengthAdjust="spacing">Rser=3.3 Cpar=83.8p</text><text transform="translate(226,358) scale(1,1.12)" x="0" y="0" font-family="Liberation Sans" font-weight="bold" font-size="6.3" fill="#000000" stroke="#000000" stroke-width="0.15" textLength="67" lengthAdjust="spacing">Rser=2.8 Cpar=108p</text><text transform="translate(306,350) scale(1,1.12)" x="0" y="0" font-family="Liberation Sans" font-weight="bold" font-size="6.3" fill="#000000" stroke="#000000" stroke-width="0.15" textLength="7" lengthAdjust="spacing">L1</text><text transform="translate(306,363) scale(1,1.12)" x="0" y="0" font-family="Liberation Sans" font-weight="bold" font-size="6.3" fill="#000000" stroke="#000000" stroke-width="0.15" textLength="14" lengthAdjust="spacing">136µ</text><text transform="translate(350,326) scale(1,1.12)" x="0" y="0" font-family="Liberation Sans" font-weight="bold" font-size="6.3" fill="#000000" stroke="#000000" stroke-width="0.15" textLength="7" lengthAdjust="spacing">R5</text><text transform="translate(350,337) scale(1,1.12)" x="0" y="0" font-family="Liberation Sans" font-weight="bold" font-size="6.3" fill="#000000" stroke="#000000" stroke-width="0.15" textLength="13" lengthAdjust="spacing">1447</text><text transform="translate(458,319) scale(1,1.12)" x="0" y="0" font-family="Liberation Sans" font-weight="bold" font-size="6.3" fill="#000000" stroke="#000000" stroke-width="0.15" textLength="7" lengthAdjust="spacing">D3</text><text transform="translate(473,319) scale(1,1.12)" x="0" y="0" font-family="Liberation Sans" font-weight="bold" font-size="6.3" fill="#000000" stroke="#000000" stroke-width="0.15" textLength="8" lengthAdjust="spacing">D4</text><text transform="translate(429,339) scale(1,1.12)" x="0" y="0" font-family="Liberation Sans" font-weight="bold" font-size="6.3" fill="#000000" stroke="#000000" stroke-width="0.15" textLength="23" lengthAdjust="spacing">1N4148</text><text transform="translate(457,340) scale(1,1.12)" x="0" y="0" font-family="Liberation Sans" font-weight="bold" font-size="6.3" fill="#000000" stroke="#000000" stroke-width="0.15" textLength="23" lengthAdjust="spacing">1N4148</text><text transform="translate(306,419) scale(1,1.12)" x="0" y="0" font-family="Liberation Sans" font-weight="bold" font-size="6.3" fill="#000000" stroke="#000000" stroke-width="0.15" textLength="8" lengthAdjust="spacing">R4</text><text transform="translate(306,429) scale(1,1.12)" x="0" y="0" font-family="Liberation Sans" font-weight="bold" font-size="6.3" fill="#000000" stroke="#000000" stroke-width="0.15" textLength="9" lengthAdjust="spacing">3.3</text><text transform="translate(302,450) scale(1,1.12)" x="0" y="0" font-family="Liberation Sans" font-weight="bold" font-size="6.3" fill="#000000" stroke="#000000" stroke-width="0.15" textLength="7" lengthAdjust="spacing">D2</text><text transform="translate(301,470) scale(1,1.12)" x="0" y="0" font-family="Liberation Sans" font-weight="bold" font-size="6.3" fill="#000000" stroke="#000000" stroke-width="0.15" textLength="26" lengthAdjust="spacing">MUR460</text><text transform="translate(301,494) scale(1,1.12)" x="0" y="0" font-family="Liberation Sans" font-weight="bold" font-size="6.3" fill="#000000" stroke="#000000" stroke-width="0.15" textLength="8" lengthAdjust="spacing">M1</text><text transform="translate(302,506) scale(1,1.12)" x="0" y="0" font-family="Liberation Sans" font-weight="bold" font-size="6.3" fill="#000000" stroke="#000000" stroke-width="0.15" textLength="43" lengthAdjust="spacing">SPA11N60C3</text><text transform="translate(400,383) scale(1,1.12)" x="0" y="0" font-family="Liberation Sans" font-weight="bold" font-size="6.3" fill="#000000" stroke="#000000" stroke-width="0.15" textLength="7" lengthAdjust="spacing">R8</text><text transform="translate(400,400) scale(1,1.12)" x="0" y="0" font-family="Liberation Sans" font-weight="bold" font-size="6.3" fill="#000000" stroke="#000000" stroke-width="0.15" textLength="6" lengthAdjust="spacing">1k</text><text transform="translate(571,339) scale(1,1.12)" x="0" y="0" font-family="Liberation Sans" font-weight="bold" font-size="6.3" fill="#000000" stroke="#000000" stroke-width="0.15" textLength="7" lengthAdjust="spacing">R7</text><text transform="translate(566,356) scale(1,1.12)" x="0" y="0" font-family="Liberation Sans" font-weight="bold" font-size="6.3" fill="#000000" stroke="#000000" stroke-width="0.15" textLength="18" lengthAdjust="spacing">1MEG</text><text transform="translate(635,397) scale(1,1.12)" x="0" y="0" font-family="Liberation Sans" font-weight="bold" font-size="6.3" fill="#000000" stroke="#000000" stroke-width="0.15" textLength="29" lengthAdjust="spacing">PREAMP</text><text transform="translate(557,387) scale(1,1.12)" x="0" y="0" font-family="Liberation Sans" font-weight="bold" font-size="6.3" fill="#000000" stroke="#000000" stroke-width="0.15" textLength="8" lengthAdjust="spacing">U2</text><text transform="translate(557,406) scale(1,1.12)" x="0" y="0" font-family="Liberation Sans" font-weight="bold" font-size="6.3" fill="#000000" stroke="#000000" stroke-width="0.15" textLength="21" lengthAdjust="spacing">LT1007</text><text transform="translate(555,373.5) rotate(-90) scale(1,1.12)" x="0" y="0" font-family="Liberation Sans" font-weight="bold" font-size="6.3" fill="#000000" stroke="#000000" stroke-width="0.15" textLength="14" lengthAdjust="spacing">VCC</text><text transform="translate(555,428) rotate(-90) scale(1,1.12)" x="0" y="0" font-family="Liberation Sans" font-weight="bold" font-size="6.3" fill="#000000" stroke="#000000" stroke-width="0.15" textLength="14" lengthAdjust="spacing">VEE</text><text transform="translate(297.8,403) rotate(-90) scale(1,1.12)" x="0" y="0" font-family="Liberation Sans" font-weight="bold" font-size="6.3" fill="#000000" stroke="#000000" stroke-width="0.15" textLength="7.5" lengthAdjust="spacing">TX</text><text transform="translate(428,457) rotate(-90) scale(1,1.12)" x="0" y="0" font-family="Liberation Sans" font-weight="bold" font-size="6.3" fill="#000000" stroke="#000000" stroke-width="0.15" textLength="15" lengthAdjust="spacing">VCC</text><text transform="translate(428,554) rotate(-90) scale(1,1.12)" x="0" y="0" font-family="Liberation Sans" font-weight="bold" font-size="6.3" fill="#000000" stroke="#000000" stroke-width="0.15" textLength="15" lengthAdjust="spacing">VEE</text><text transform="translate(432,470) scale(1,1.12)" x="0" y="0" font-family="Liberation Sans" font-weight="bold" font-size="6.3" fill="#000000" stroke="#000000" stroke-width="0.15" textLength="9" lengthAdjust="spacing">V4</text><text transform="translate(432,494) scale(1,1.12)" x="0" y="0" font-family="Liberation Sans" font-weight="bold" font-size="6.3" fill="#000000" stroke="#000000" stroke-width="0.15" textLength="5" lengthAdjust="spacing">5</text><text transform="translate(432,504) scale(1,1.12)" x="0" y="0" font-family="Liberation Sans" font-weight="bold" font-size="6.3" fill="#000000" stroke="#000000" stroke-width="0.15" textLength="9" lengthAdjust="spacing">V6</text><text transform="translate(432,528) scale(1,1.12)" x="0" y="0" font-family="Liberation Sans" font-weight="bold" font-size="6.3" fill="#000000" stroke="#000000" stroke-width="0.15" textLength="5" lengthAdjust="spacing">5</text><text transform="translate(29,445) scale(1,1.12)" x="0" y="0" font-family="Liberation Sans" font-weight="bold" font-size="6.3" fill="#000000" stroke="#000000" stroke-width="0.15" textLength="9" lengthAdjust="spacing">V5</text><text transform="translate(30,470) scale(1,1.12)" x="0" y="0" font-family="Liberation Sans" font-weight="bold" font-size="6.3" fill="#000000" stroke="#000000" stroke-width="0.15" textLength="12" lengthAdjust="spacing">12V</text><text transform="translate(189,555) scale(1,1.12)" x="0" y="0" font-family="Liberation Sans" font-weight="bold" font-size="6.3" fill="#000000" stroke="#000000" stroke-width="0.15" textLength="7" lengthAdjust="spacing">R2</text><text transform="translate(189,566) scale(1,1.12)" x="0" y="0" font-family="Liberation Sans" font-weight="bold" font-size="6.3" fill="#000000" stroke="#000000" stroke-width="0.15" textLength="11" lengthAdjust="spacing">10k</text><text transform="translate(247,555) scale(1,1.12)" x="0" y="0" font-family="Liberation Sans" font-weight="bold" font-size="6.3" fill="#000000" stroke="#000000" stroke-width="0.15" textLength="8" lengthAdjust="spacing">R1</text><text transform="translate(246,566) scale(1,1.12)" x="0" y="0" font-family="Liberation Sans" font-weight="bold" font-size="6.3" fill="#000000" stroke="#000000" stroke-width="0.15" textLength="11" lengthAdjust="spacing">220</text><text transform="translate(306,555) scale(1,1.12)" x="0" y="0" font-family="Liberation Sans" font-weight="bold" font-size="6.3" fill="#000000" stroke="#000000" stroke-width="0.15" textLength="11" lengthAdjust="spacing">R10</text><text transform="translate(306,566) scale(1,1.12)" x="0" y="0" font-family="Liberation Sans" font-weight="bold" font-size="6.3" fill="#000000" stroke="#000000" stroke-width="0.15" textLength="3" lengthAdjust="spacing">1</text><text transform="translate(335,555) scale(1,1.12)" x="0" y="0" font-family="Liberation Sans" font-weight="bold" font-size="6.3" fill="#000000" stroke="#000000" stroke-width="0.15" textLength="9" lengthAdjust="spacing">C1</text><text transform="translate(336,569) scale(1,1.12)" x="0" y="0" font-family="Liberation Sans" font-weight="bold" font-size="6.3" fill="#000000" stroke="#000000" stroke-width="0.15" textLength="18" lengthAdjust="spacing">1000µ</text><text transform="translate(39,592) scale(1,1.12)" x="0" y="0" font-family="Liberation Sans" font-weight="bold" font-size="6.3" fill="#000000" stroke="#000000" stroke-width="0.15" textLength="15" lengthAdjust="spacing">-12V</text><g><path d="M484.5 322.5 L484.5 262.5 L22.5 262.5 L22.5 444.5" fill="none" stroke="#0000ff" stroke-width="1" shape-rendering="crispEdges"/><path d="M22.5 464.5 L22.5 593.5 L299.5 593.5 L299.5 568.5" fill="none" stroke="#0000ff" stroke-width="1" shape-rendering="crispEdges"/><circle cx="22.5" cy="454.5" r="9.5" fill="none" stroke="#000080"/><path d="M18.5 448.5h8M22.5 444.5v8" fill="none" stroke="#000080" stroke-width="1"/><path d="M19.0 460.5h7" fill="none" stroke="#000080" stroke-width="1"/><path d="M80.5 262.5 L80.5 362.5" fill="none" stroke="#0000ff" stroke-width="1" shape-rendering="crispEdges"/><circle cx="80.5" cy="372.5" r="9.5" fill="none" stroke="#000080"/><path d="M76.5 378.5h8M80.5 374.5v8" fill="none" stroke="#000080" stroke-width="1"/><path d="M77.0 366.5h7" fill="none" stroke="#000080" stroke-width="1"/><path d="M80.5 382.5 L80.5 408.5 L105.5 408.5" fill="none" stroke="#0000ff" stroke-width="1" shape-rendering="crispEdges"/><path d="M104.5 408.5h2.5L109.5 403.5L114.5 413.5L119.5 403.5L124.5 413.5L127.0 408.5h2.5" fill="none" stroke="#000080" stroke-width="1"/><path d="M129.5 408.5 L167.5 408.5" fill="none" stroke="#0000ff" stroke-width="1" shape-rendering="crispEdges"/><path d="M167.5 399v20" fill="none" stroke="#000080" stroke-width="1"/><path d="M167.5 403.5L182.5 394.5M167.5 414.5L182.5 423.5" fill="none" stroke="#000080" stroke-width="1"/><path d="M168.5 402.5L173.5 397.5L176.5 400.5Z" fill="none" stroke="#000080" stroke-width="1"/><path d="M182.5 262.5 L182.5 394.5" fill="none" stroke="#0000ff" stroke-width="1" shape-rendering="crispEdges"/><path d="M182.5 423.5 L182.5 545.5" fill="none" stroke="#0000ff" stroke-width="1" shape-rendering="crispEdges"/><path d="M182.5 544.5v2.5L187.5 549.5L177.5 554.5L187.5 559.5L177.5 564.5L182.5 567.0v2.5" fill="none" stroke="#000080" stroke-width="1"/><path d="M182.5 568.5 L182.5 593.5" fill="none" stroke="#0000ff" stroke-width="1" shape-rendering="crispEdges"/><path d="M182.5 467.5 L226.5 467.5" fill="none" stroke="#0000ff" stroke-width="1" shape-rendering="crispEdges"/><path d="M226.5 457v20" fill="none" stroke="#000080" stroke-width="1"/><path d="M226.5 462.5L240.5 453.5M226.5 472.5L240.5 481.5" fill="none" stroke="#000080" stroke-width="1"/><path d="M239.5 481.5L232.5 478.5L234.5 475Z" fill="none" stroke="#000080" stroke-width="1"/><path d="M240.5 262.5 L240.5 453.5" fill="none" stroke="#0000ff" stroke-width="1" shape-rendering="crispEdges"/><path d="M240.5 481.5 L240.5 545.5" fill="none" stroke="#0000ff" stroke-width="1" shape-rendering="crispEdges"/><path d="M240.5 544.5v2.5L245.5 549.5L235.5 554.5L245.5 559.5L235.5 564.5L240.5 567.0v2.5" fill="none" stroke="#000080" stroke-width="1"/><path d="M240.5 568.5 L240.5 593.5" fill="none" stroke="#0000ff" stroke-width="1" shape-rendering="crispEdges"/><path d="M240.5 505.5 L285.5 505.5" fill="none" stroke="#0000ff" stroke-width="1" shape-rendering="crispEdges"/><path d="M285 505.5h2.5V486" fill="none" stroke="#000080" stroke-width="1"/><path d="M289.5 484v5M289.5 493v6M289.5 503v6" fill="none" stroke="#000080" stroke-width="1"/><path d="M289.5 486.5h10v-5M289.5 505.5h10v5M289.5 496.5h10v9" fill="none" stroke="#000080" stroke-width="1"/><path d="M293 495.5h3l1 1-1 1h-3z" fill="none" stroke="#000080" stroke-width="1"/><path d="M270.5 262.5 L270.5 283.5" fill="none" stroke="#0000ff" stroke-width="1" shape-rendering="crispEdges"/><path d="M270.5 282.5v2.5L275.5 287.5L265.5 292.5L275.5 297.5L265.5 302.5L270.5 305.0v2.5" fill="none" stroke="#000080" stroke-width="1"/><path d="M270.5 306.5 L270.5 321.5 L299.5 321.5" fill="none" stroke="#0000ff" stroke-width="1" shape-rendering="crispEdges"/><path d="M299.5 262.5 L299.5 282.5" fill="none" stroke="#0000ff" stroke-width="1" shape-rendering="crispEdges"/><path d="M299.5 282v0.5a5 4.2 0 0 1 0 8a5 4.2 0 0 1 0 8a5 4.2 0 0 1 0 8v0.5" fill="none" stroke="#000080" stroke-width="1.15"/><path d="M299.5 307.5 L299.5 340.5" fill="none" stroke="#0000ff" stroke-width="1" shape-rendering="crispEdges"/><path d="M299.5 340v0.5a5 4.2 0 0 1 0 8a5 4.2 0 0 1 0 8a5 4.2 0 0 1 0 8v0.5" fill="none" stroke="#000080" stroke-width="1.15"/><path d="M299.5 365.5 L299.5 410.5" fill="none" stroke="#0000ff" stroke-width="1" shape-rendering="crispEdges"/><path d="M295 290.5h8M295 298.5h8" fill="none" stroke="#000080" stroke-width="1.8"/><path d="M297 288.5h3M298 292.5h2M297.5 296.5h2.5M298 300.5h3" fill="none" stroke="#000080" stroke-width="1"/><path d="M296.5 301l1.5 1.5-1.5 1.5-1.5-1.5z" fill="none" stroke="#000080" stroke-width="0.9"/><path d="M295 349h8" fill="none" stroke="#000080" stroke-width="1.8"/><path d="M302 347.5L297.5 349.5L302 351" fill="none" stroke="#000080" stroke-width="1"/><path d="M296.5 355.5h5l1.5 1.5-1.5 1.5h-5l-1.5-1.5z" fill="none" stroke="#000080" stroke-width="1.1"/><path d="M295 361.5h3" fill="none" stroke="#000080" stroke-width="2"/><path d="M299.5 408.5v2.5L304.5 413.5L294.5 418.5L304.5 423.5L294.5 428.5L299.5 431.0v2.5" fill="none" stroke="#000080" stroke-width="1"/><path d="M299.5 432.5 L299.5 453.5" fill="none" stroke="#0000ff" stroke-width="1" shape-rendering="crispEdges"/><path d="M293.5 453.5h11L299.5 460.5Z M293.5 460.5h11" fill="none" stroke="#000080" stroke-width="1"/><path d="M299.5 461.5 L299.5 481.5" fill="none" stroke="#0000ff" stroke-width="1" shape-rendering="crispEdges"/><path d="M299.5 510.5 L299.5 545.5" fill="none" stroke="#0000ff" stroke-width="1" shape-rendering="crispEdges"/><path d="M299.5 544.5v2.5L304.5 549.5L294.5 554.5L304.5 559.5L294.5 564.5L299.5 567.0v2.5" fill="none" stroke="#000080" stroke-width="1"/><path d="M343.5 262.5 L343.5 317.5" fill="none" stroke="#0000ff" stroke-width="1" shape-rendering="crispEdges"/><path d="M343.5 316.5v2.5L348.5 321.5L338.5 326.5L348.5 331.5L338.5 336.5L343.5 339.0v2.5" fill="none" stroke="#000080" stroke-width="1"/><path d="M343.5 340.5 L343.5 389.5" fill="none" stroke="#0000ff" stroke-width="1" shape-rendering="crispEdges"/><path d="M367.5 262.5 L367.5 272.5" fill="none" stroke="#0000ff" stroke-width="1" shape-rendering="crispEdges"/><path d="M361.5 272.5h12L367.5 278.5Z" fill="none" stroke="#0000ff" stroke-width="1"/><path d="M454.5 262.5 L454.5 322.5" fill="none" stroke="#0000ff" stroke-width="1" shape-rendering="crispEdges"/><path d="M448.5 322.5h11L454.5 329.5Z M448.5 329.5h11" fill="none" stroke="#000080" stroke-width="1"/><path d="M454.5 330.5 L454.5 389.5" fill="none" stroke="#0000ff" stroke-width="1" shape-rendering="crispEdges"/><path d="M478.5 322.5h11M484.5 322.5L478.5 329.5h11Z" fill="none" stroke="#000080" stroke-width="1"/><path d="M484.5 330.5 L484.5 389.5" fill="none" stroke="#0000ff" stroke-width="1" shape-rendering="crispEdges"/><path d="M299.5 389.5 L392.5 389.5" fill="none" stroke="#0000ff" stroke-width="1" shape-rendering="crispEdges"/><path d="M391.5 389.5h2.5L396.5 384.5L401.5 394.5L406.5 384.5L411.5 394.5L414.0 389.5h2.5" fill="none" stroke="#000080" stroke-width="1"/><path d="M416.5 389.5 L542.5 389.5" fill="none" stroke="#0000ff" stroke-width="1" shape-rendering="crispEdges"/><path d="M299.5 530.5 L333.5 530.5 L333.5 558.5" fill="none" stroke="#0000ff" stroke-width="1" shape-rendering="crispEdges"/><path d="M327 558.5h12M327 561.5h12" fill="none" stroke="#000080" stroke-width="1"/><path d="M333.5 562.5 L333.5 588.5" fill="none" stroke="#0000ff" stroke-width="1" shape-rendering="crispEdges"/><path d="M327.5 588.5h12L333.5 594.5Z" fill="none" stroke="#0000ff" stroke-width="1"/><path d="M527.5 389.5 L527.5 345.5 L562.5 345.5" fill="none" stroke="#0000ff" stroke-width="1" shape-rendering="crispEdges"/><path d="M561.5 345.5h2.5L566.5 340.5L571.5 350.5L576.5 340.5L581.5 350.5L584.0 345.5h2.5" fill="none" stroke="#000080" stroke-width="1"/><path d="M586.5 345.5 L600.5 345.5 L600.5 394.5" fill="none" stroke="#0000ff" stroke-width="1" shape-rendering="crispEdges"/><path d="M560.5 394.5 L635.5 394.5" fill="none" stroke="#0000ff" stroke-width="1" shape-rendering="crispEdges"/><path d="M542.5 399.5 L527.5 399.5 L527.5 413.5" fill="none" stroke="#0000ff" stroke-width="1" shape-rendering="crispEdges"/><path d="M521.5 413.5h12L527.5 419.5Z" fill="none" stroke="#0000ff" stroke-width="1"/><path d="M542.5 384v20L560.5 394.5Z" fill="none" stroke="#000080" stroke-width="1"/><path d="M542 389.5h5M542 399.5h5M544.5 396.5v6" fill="none" stroke="#000080" stroke-width="1"/><path d="M552.5 374.5 L552.5 386.5" fill="none" stroke="#0000ff" stroke-width="1" shape-rendering="crispEdges"/><path d="M552.5 386v4M551 388.5h4" fill="none" stroke="#000080" stroke-width="1"/><path d="M552.5 399v5M552 400.5h4" fill="none" stroke="#000080" stroke-width="1"/><path d="M552.5 403.5 L552.5 413.5" fill="none" stroke="#0000ff" stroke-width="1" shape-rendering="crispEdges"/><path d="M425.5 457.5 L425.5 468.5" fill="none" stroke="#0000ff" stroke-width="1" shape-rendering="crispEdges"/><circle cx="425.5" cy="478.5" r="9.5" fill="none" stroke="#000080"/><path d="M421.5 472.5h8M425.5 468.5v8" fill="none" stroke="#000080" stroke-width="1"/><path d="M422.0 484.5h7" fill="none" stroke="#000080" stroke-width="1"/><path d="M425.5 488.5 L425.5 502.5" fill="none" stroke="#0000ff" stroke-width="1" shape-rendering="crispEdges"/><circle cx="425.5" cy="512.5" r="9.5" fill="none" stroke="#000080"/><path d="M421.5 506.5h8M425.5 502.5v8" fill="none" stroke="#000080" stroke-width="1"/><path d="M422.0 518.5h7" fill="none" stroke="#000080" stroke-width="1"/><path d="M425.5 522.5 L425.5 539.5" fill="none" stroke="#0000ff" stroke-width="1" shape-rendering="crispEdges"/><path d="M425.5 496.5 L407.5 496.5 L407.5 505.5" fill="none" stroke="#0000ff" stroke-width="1" shape-rendering="crispEdges"/><path d="M401.5 505.5h12L407.5 511.5Z" fill="none" stroke="#0000ff" stroke-width="1"/><rect x="79" y="261" width="3" height="3" fill="#0000ff"/><rect x="181" y="261" width="3" height="3" fill="#0000ff"/><rect x="239" y="261" width="3" height="3" fill="#0000ff"/><rect x="269" y="261" width="3" height="3" fill="#0000ff"/><rect x="298" y="261" width="3" height="3" fill="#0000ff"/><rect x="342" y="261" width="3" height="3" fill="#0000ff"/><rect x="366" y="261" width="3" height="3" fill="#0000ff"/><rect x="453" y="261" width="3" height="3" fill="#0000ff"/><rect x="298" y="320" width="3" height="3" fill="#0000ff"/><rect x="181" y="466" width="3" height="3" fill="#0000ff"/><rect x="239" y="504" width="3" height="3" fill="#0000ff"/><rect x="298" y="388" width="3" height="3" fill="#0000ff"/><rect x="342" y="388" width="3" height="3" fill="#0000ff"/><rect x="453" y="388" width="3" height="3" fill="#0000ff"/><rect x="483" y="388" width="3" height="3" fill="#0000ff"/><rect x="526" y="388" width="3" height="3" fill="#0000ff"/><rect x="599" y="393" width="3" height="3" fill="#0000ff"/><rect x="298" y="529" width="3" height="3" fill="#0000ff"/><rect x="181" y="592" width="3" height="3" fill="#0000ff"/><rect x="239" y="592" width="3" height="3" fill="#0000ff"/><rect x="424" y="495" width="3" height="3" fill="#0000ff"/></g>
</svg></body></html>
